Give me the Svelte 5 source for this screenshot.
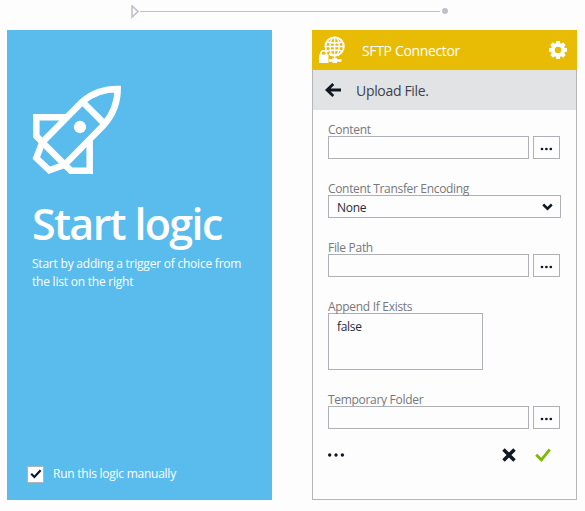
<script>
  let manual = $state(true);
</script>

{#snippet dots()}
  <svg width="13" height="4" viewBox="0 0 13 4"><circle cx="2" cy="2" r="1.35" /><circle cx="6.4" cy="2" r="1.35" /><circle cx="10.8" cy="2" r="1.35" /></svg>
{/snippet}

{#snippet picker(label)}
  <div class="field">
    <span class="label">{label}</span>
    <div class="row">
      <div class="box input"></div>
      <div class="box more">{@render dots()}</div>
    </div>
  </div>
{/snippet}

<main>
  <div class="track">
    <svg width="317" height="14" viewBox="0 0 317 14">
      <path d="M1 .8V12.2L7 6.5Z" fill="none" stroke="#c0c2cc" stroke-width="1.6" />
      <path d="M9 6.5H309" stroke="#bfc0c9" />
      <circle cx="314" cy="6" r="3" fill="#bfc0c9" />
    </svg>
  </div>
  <div class="cards">
    <section class="start">
      <svg class="rocket" width="90" height="90" viewBox="96 255 270 270" fill="none" stroke="#fff" stroke-width="19.5">
        <path d="M353 267C310 267 277 279 247 305L127 427L194 494L312 374C340 342 353 310 353 267Z" />
        <path d="M245 303L313 371M200 352H109V408L127 427L109 474L148 511L194 494L213 512H269V418" />
        <circle cx="240" cy="381" r="18.5" fill="#fff" stroke="none" />
      </svg>
      <h1>Start logic</h1>
      <p>Start by adding a trigger of choice from<br />the list on the right</p>
      <button class="manual" onclick={() => (manual = !manual)}>
        <span class="check">
          {#if manual}<svg width="12" height="10" viewBox="0 0 12 10"><path d="M1.2 4.8L4.4 8L10.6 1.3" fill="none" stroke="#101824" stroke-width="2.2" /></svg>{/if}
        </span>
        <span>Run this logic manually</span>
      </button>
    </section>

    <section class="connector">
      <header>
        <svg width="27" height="28" viewBox="0 0 27 28" fill="none" stroke="#fff">
          <g stroke-width="1.4">
            <circle cx="15.6" cy="10.5" r="9.2" stroke-width="1.8" />
            <ellipse cx="15.6" cy="10.5" rx="4.7" ry="9.2" />
            <path d="M15.6 1.5V22M6.5 10.5H24.7M8 6Q15.6 8 23.2 6M8 15.1Q15.6 12.9 23.2 15.1" />
          </g>
          <path d="M10 24.5H22.5" stroke-width="2.5" />
          <path d="M13.5 24.5H18" stroke-width="5" />
          <path d="M0 16H10V28H0Z" fill="#e8bc04" stroke="none" />
          <path d="M0 18.5H9.5V27H0Z" fill="#fff" stroke="none" />
          <path d="M2 19.5V17.3C2 13.8 7.5 13.8 7.5 17.3V19.5" stroke-width="1.6" />
        </svg>
        <h2>SFTP Connector</h2>
        <svg width="18" height="18" viewBox="-9 -9 18 18">
          {#each [0, 45, 90, 135, 180, 225, 270, 315] as angle}
            <path d="M-2.3 -6L-1.8 -9H1.8L2.3 -6Z" fill="#fff" transform="rotate({angle})" />
          {/each}
          <circle r="5.1" fill="none" stroke="#fff" stroke-width="3.7" />
        </svg>
      </header>
      <div class="sub">
        <svg width="17" height="14" viewBox="0 0 17 14"><path d="M2 7H16M8.3 1L2 7L8.3 13" fill="none" stroke="#101824" stroke-width="2.8" /></svg>
        <span>Upload File.</span>
      </div>
      <div class="form">
        {@render picker('Content')}
        <div class="field">
          <span class="label wide">Content Transfer Encoding</span>
          <div class="box select">
            <span>None</span>
            <svg width="11" height="8" viewBox="0 0 11 8"><path d="M1.2 1.5L5.5 5.7L9.8 1.5" fill="none" stroke="#101824" stroke-width="2.5" /></svg>
          </div>
        </div>
        {@render picker('File Path')}
        <div class="field">
          <span class="label">Append If Exists</span>
          <div class="box area">false</div>
        </div>
        {@render picker('Temporary Folder')}
        <footer>
          <svg width="17" height="4" viewBox="0 0 17 4"><circle cx="1.7" cy="2" r="1.7" /><circle cx="8" cy="2" r="1.7" /><circle cx="14.4" cy="2" r="1.7" /></svg>
          <svg class="cancel" width="14" height="14" viewBox="0 0 14 14"><path d="M1.5 1.5L12.5 12.5M12.5 1.5L1.5 12.5" stroke="#101824" stroke-width="3.5" /></svg>
          <svg width="16" height="14" viewBox="0 0 16 14"><path d="M1.2 6.7L6.3 11.8L14.8 1.5" fill="none" stroke="#7fba00" stroke-width="2.8" /></svg>
        </footer>
      </div>
    </section>
  </div>
</main>

<style>
  :global(body) { background: #fdfdfe; }
  * { box-sizing: border-box; }
  main { width: 585px; height: 511px; overflow: hidden; background: #fdfdfe; font-family: "Open Sans", sans-serif; }
  svg { display: block; flex: none; }
  .track { height: 30px; padding: 5px 0 0 131px; }
  .cards { display: flex; gap: 40px; padding-left: 7px; }
  section { width: 265px; height: 470px; }
  .start { background: #5abcec; color: #fff; display: flex; flex-direction: column; align-items: flex-start; padding: 55px 0 17px 25px; }
  h1 { margin: 19px 0 0; font: 600 43px/60px "Open Sans", sans-serif; letter-spacing: -1.65px; white-space: nowrap; }
  p { margin: 1px 0 0; font-size: 12px; line-height: 18px; letter-spacing: -0.22px; white-space: nowrap; }
  .manual { display: flex; align-items: center; gap: 9px; margin: auto 0 0 -5px; padding: 0; border: 0; background: none; color: #fff; font: 12px/18px "Open Sans", sans-serif; letter-spacing: -0.25px; }
  .check { width: 17px; height: 17px; border: 1px solid #b0b5b9; background: #fff; display: grid; place-items: center; }
  .connector { border: 1px solid #b5b6ba; border-top: 0; }
  header { height: 40px; margin: 0 -1px; padding: 0 10px 0 7px; background: #e8bc04; color: #fff; display: flex; align-items: center; }
  h2 { flex: 1; margin: 0 0 0 16px; font-size: 14px; font-weight: 400; letter-spacing: -0.35px; }
  .sub { height: 40px; padding-left: 12px; background: #e2e3e5; color: #3c424d; display: flex; align-items: center; gap: 14px; font-size: 14px; letter-spacing: -0.32px; }
  .form { padding: 9px 0 0 15px; display: flex; flex-direction: column; gap: 19px; }
  .label { display: block; height: 17px; line-height: 21px; font-size: 12px; color: #77787b; letter-spacing: -0.3px; white-space: nowrap; }
  .wide { letter-spacing: -0.33px; }
  .row { display: flex; gap: 4px; }
  .box { border: 1px solid #afb0b5; height: 23px; background: #fdfdfe; color: #252b36; font-size: 12px; letter-spacing: -0.3px; }
  .input { width: 201px; }
  .more { width: 27px; display: grid; place-items: center; padding-top: 3px; fill: #101824; }
  .select { width: 233px; display: flex; align-items: center; justify-content: space-between; padding: 1px 7px 0 8px; }
  .area { width: 155px; height: 57px; padding: 4px 8px; line-height: 17px; }
  footer { display: flex; align-items: center; width: 223px; height: 14px; fill: #101824; }
  .cancel { margin: 0 19px 0 auto; }
</style>
